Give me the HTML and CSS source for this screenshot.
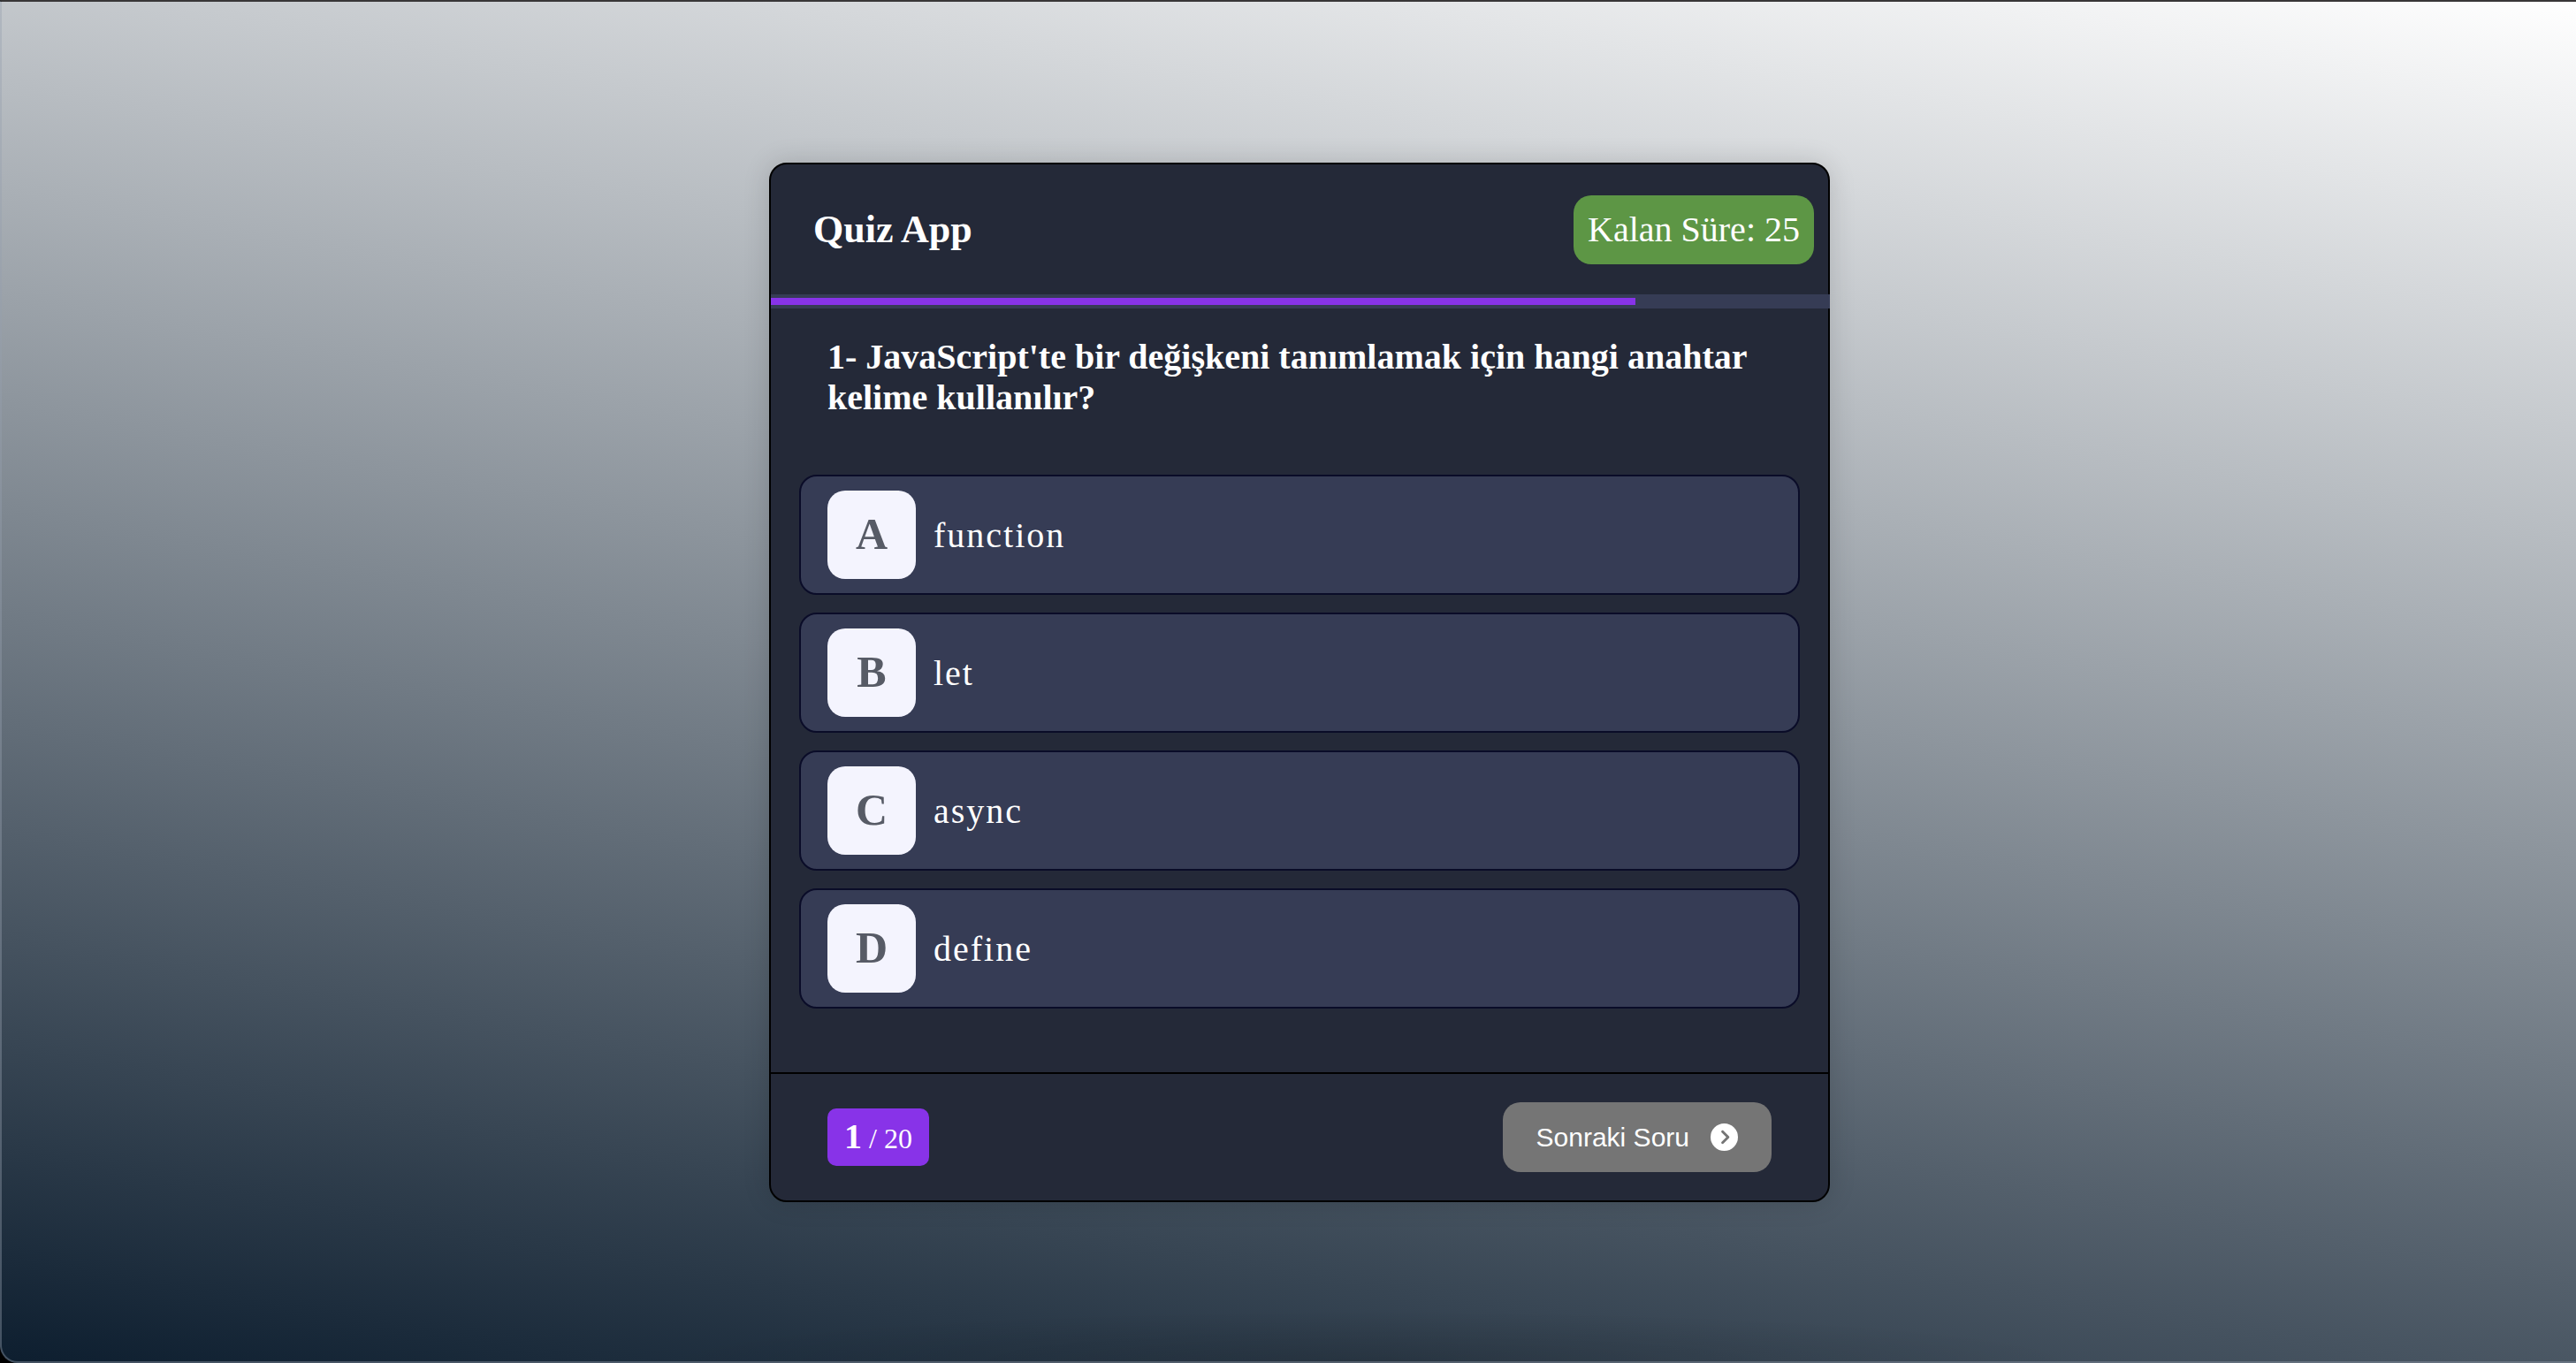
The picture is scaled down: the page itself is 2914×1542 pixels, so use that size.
FILE: index.html
```html
<!DOCTYPE html>
<html lang="tr">
<head>
<meta charset="utf-8">
<meta name="viewport" content="width=device-width, initial-scale=1">
<title>Quiz App</title>
<link rel="stylesheet" href="styles.css">
</head>
<body>
<div class="page">
  <main class="card">
    <header class="card-header">
      <h1 class="title">Quiz App</h1>
      <div class="timer">Kalan Süre: <span>25</span></div>
    </header>
    <div class="time-line"><div class="time-line-fill" style="width: 81.6%"></div></div>
    <section class="card-body">
      <h2 class="question">1- JavaScript'te bir değişkeni tanımlamak için hangi anahtar kelime kullanılır?</h2>
      <div class="options">
        <button type="button" class="option"><b class="letter">A</b><span>function</span></button>
        <button type="button" class="option"><b class="letter">B</b><span>let</span></button>
        <button type="button" class="option"><b class="letter">C</b><span>async</span></button>
        <button type="button" class="option"><b class="letter">D</b><span>define</span></button>
      </div>
    </section>
    <footer class="card-footer">
      <div class="counter"><b class="current">1</b> / 20</div>
      <button type="button" class="next">Sonraki Soru
        <svg class="next-icon" viewBox="0 0 512 512" aria-hidden="true"><path fill="currentColor" fill-rule="evenodd" d="M0 256a256 256 0 1 0 512 0A256 256 0 1 0 0 256zM241 377c-9.400 9.400-24.600 9.400-33.900 0s-9.400-24.600 0-33.900l87-87-87-87c-9.400-9.400-9.400-24.600 0-33.900s24.600-9.400 33.900 0L345 239c9.400 9.400 9.400 24.600 0 33.900L241 377z"/></svg>
      </button>
    </footer>
  </main>
</div>
</body>
</html>
```
FILE: styles.css
```css
* {
  box-sizing: border-box;
  margin: 0;
  padding: 0;
}

body {
  background: #000;
  color: #fff;
  font-family: "Liberation Serif", "Times New Roman", serif;
}

.page {
  min-height: 100vh;
  display: flex;
  align-items: center;
  justify-content: center;
  padding: 2px 0 0 24px;
  border: 2px solid rgba(150, 160, 175, 0.4);
  border-top-color: #383637;
  border-right: 0;
  border-bottom-left-radius: 20px;
  background:
    radial-gradient(820px 60px at 53% 100%, rgba(0, 0, 0, 0.14), transparent),
    linear-gradient(10deg, #0d1e2f, #fff);
  background-origin: border-box;
}

.card {
  width: 100%;
  max-width: 1200px;
  border: 2px solid #000;
  border-radius: 20px;
  background: #242938;
  box-shadow: 0 0 30px rgba(0, 0, 0, 0.15);
}

.card-header {
  display: flex;
  align-items: center;
  justify-content: space-between;
  padding: 35px 16px 34px 48px;
}

.title {
  font-size: 44px;
  line-height: 52px;
}

.timer {
  padding: 16px;
  border-radius: 20px;
  background: #5d9645;
  font-size: 40px;
  line-height: 46px;
}

.time-line {
  margin-right: -2px;
  padding: 4px 0;
  background: #363c55;
}

.time-line-fill {
  height: 8px;
  background: #8833e8;
}

.card-body {
  padding: 32px 32px 72px;
}

.question {
  padding: 0 32px;
  font-size: 40px;
  line-height: 46px;
}

.options {
  display: grid;
  gap: 20px;
  margin-top: 64px;
}

.option {
  display: flex;
  align-items: center;
  gap: 20px;
  padding: 16px 30px;
  border: 2px solid #0a0c28;
  border-radius: 20px;
  background: #363c55;
  color: #fff;
  font-family: inherit;
  font-size: 40px;
  letter-spacing: 2px;
  text-align: left;
}

.letter {
  display: grid;
  place-items: center;
  width: 100px;
  height: 100px;
  padding-bottom: 2px;
  border-radius: 20px;
  background: #f4f4fe;
  color: #575b66;
  font-size: 50px;
  letter-spacing: 0;
}

.card-footer {
  display: flex;
  align-items: center;
  justify-content: space-between;
  padding: 32px 64px;
  border-top: 2px solid #000;
}

.counter {
  padding: 12px 19px 8px;
  border-radius: 10px;
  background: #8833e8;
  font-size: 32px;
  line-height: 45px;
}

.current {
  font-size: 40px;
  line-height: 40px;
}

.next {
  display: flex;
  align-items: center;
  gap: 24px;
  padding: 24px 38px;
  border: 0;
  border-radius: 20px;
  background: #757575;
  color: #fff;
  font-family: "Liberation Sans", Arial, sans-serif;
  font-size: 30px;
  line-height: 31px;
}

.next-icon {
  width: 31px;
  height: 31px;
}
```
